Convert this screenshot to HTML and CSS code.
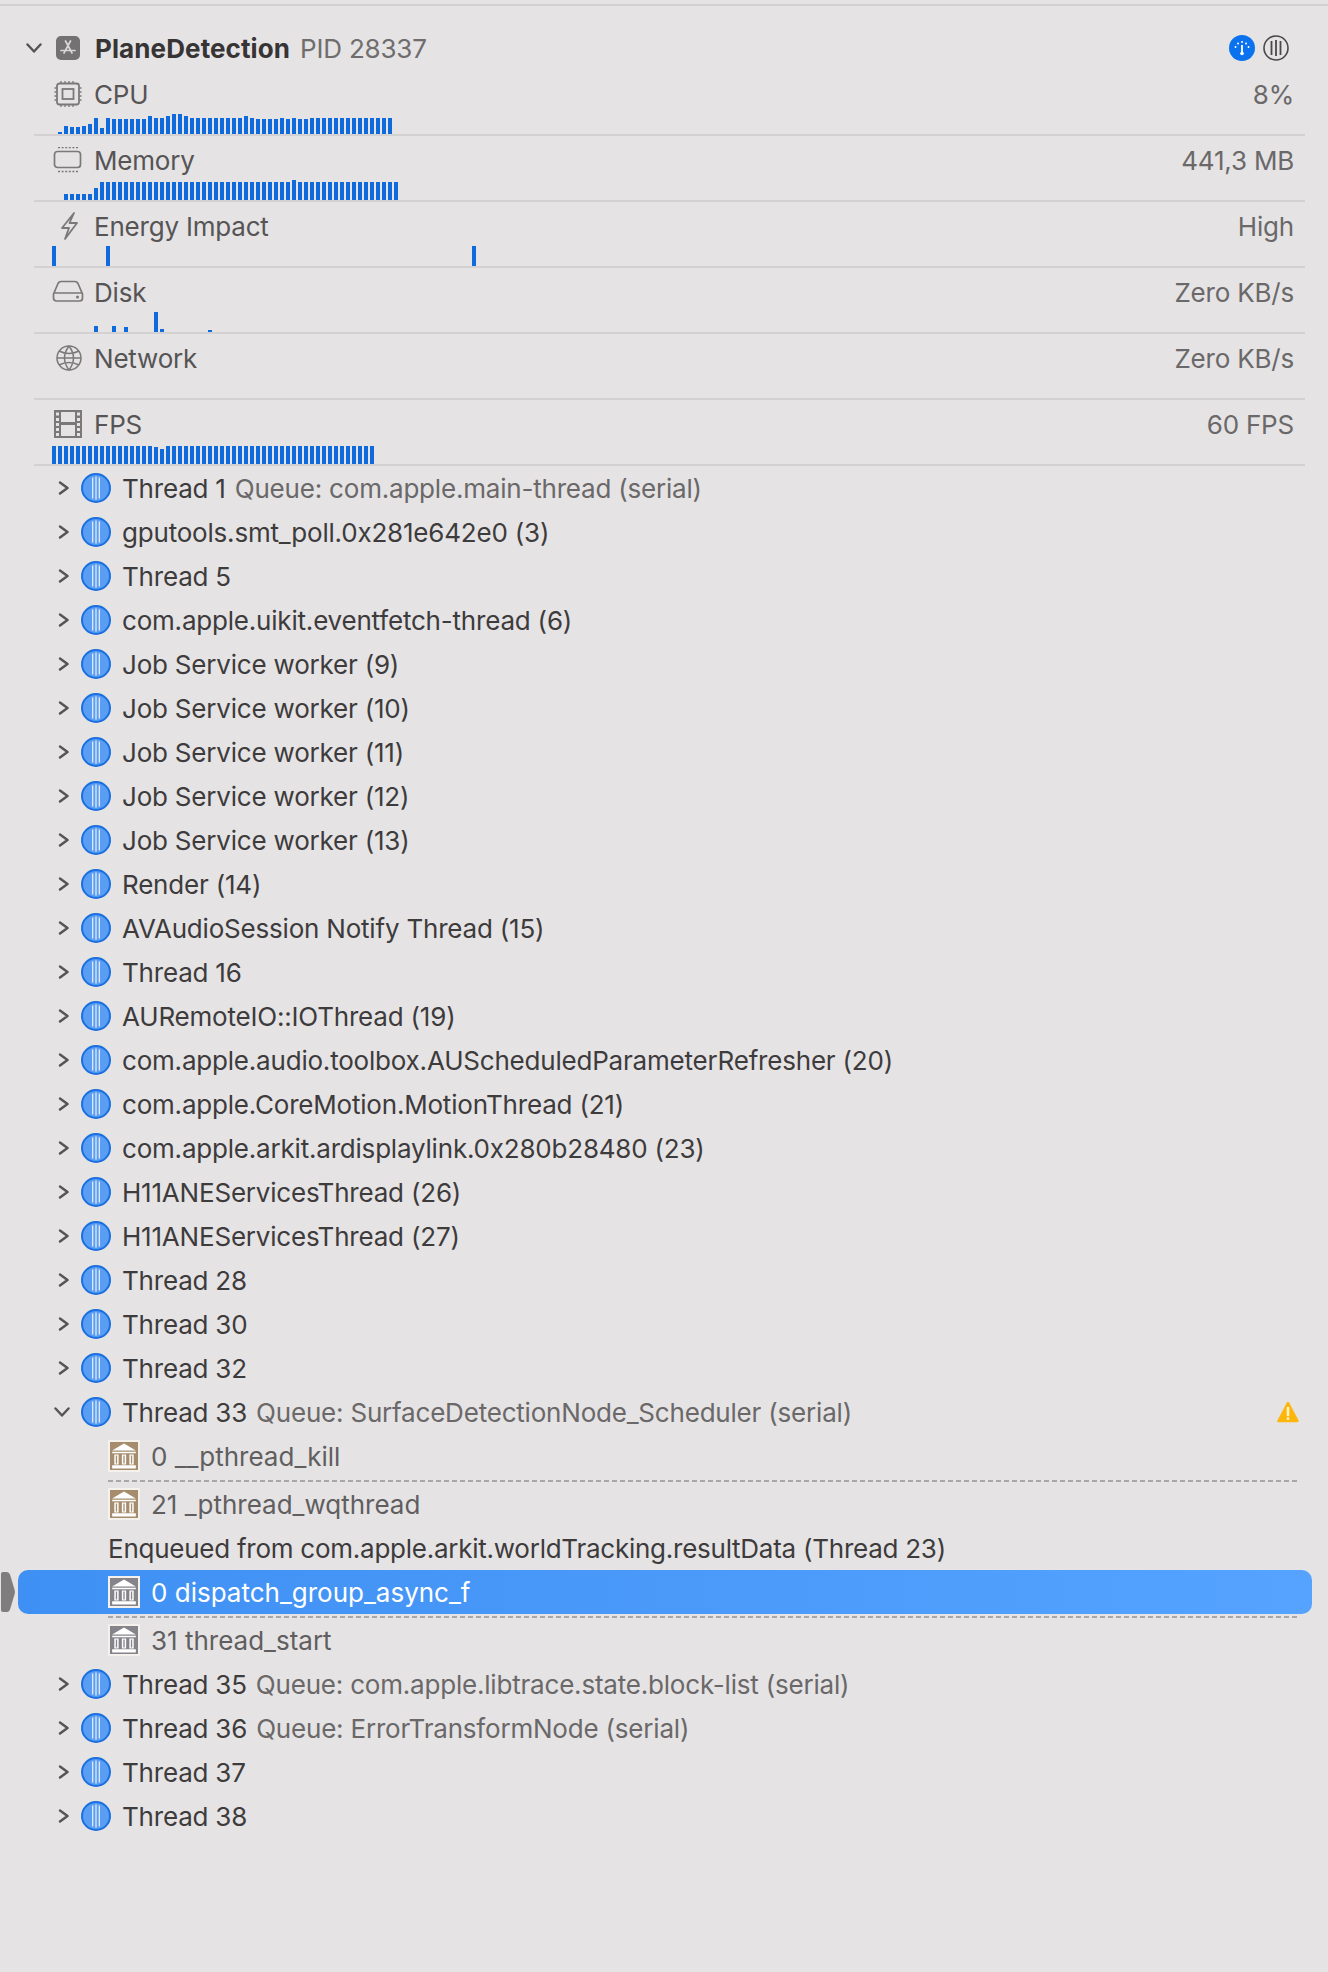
FILE: index.html
```html
<!DOCTYPE html>
<html>
<head>
	<title>Debug Navigator</title>
	<link rel="stylesheet" href="styles.css">
</head>
<body>
	<svg class="defs" width="0" height="0">
		<symbol id="chev-right" viewBox="0 0 12 14"><path d="M2 1.500 9.500 7 2 12.500" fill="none" stroke="currentColor" stroke-width="2.400" stroke-linecap="round" stroke-linejoin="round"/></symbol>
		<symbol id="chev-down" viewBox="0 0 16 10"><path d="M1.500 1.500 8 8.500l6.500-7" fill="none" stroke="currentColor" stroke-width="2.400" stroke-linecap="round" stroke-linejoin="round"/></symbol>
		<symbol id="thread" viewBox="0 0 30 30">
			<circle cx="15" cy="15" r="14" fill="#5a9ef4" stroke="#1a6fe0" stroke-width="2"/>
			<path d="M11.700 4.500v21M15 3.500v23M18.300 4.500v21" stroke="#e9f1fc" stroke-width="1.200" fill="none"/>
		</symbol>
		<symbol id="bank" viewBox="3 4 26 25">
			<path d="M16 5 27 11.500H5zM5 12.500h22v1.500H5zM7 15h4v9.500H7zM14 15h4v9.500h-4zM21 15h4v9.500h-4zM5 25h22v3H5z" fill="#fff"/>
			<path d="M9 16v7.500M16 16v7.500M23 16v7.500" stroke="currentColor" stroke-width="1.200"/>
		</symbol>
	</svg>

	<div class="panel">
		<div class="process">
			<svg class="proc-chev"><use href="#chev-down"/></svg>
			<svg class="app-icon" viewBox="0 0 24 24">
				<rect width="24" height="24" rx="5" fill="#737172"/>
				<path d="M9.500 5l6.500 12M14.500 5 8 17M5 14.500h14" stroke="#d8d6d7" stroke-width="1.700" fill="none" stroke-linecap="round"/>
			</svg>
			<span class="proc-name">PlaneDetection</span>
			<span class="proc-pid">PID 28337</span>
			<div class="proc-actions">
				<svg class="action" viewBox="0 0 26 26">
					<circle cx="13" cy="13" r="13" fill="#0a72ee"/>
					<path d="M13 10v8" stroke="#fff" stroke-width="1.800"/>
					<circle cx="13" cy="18.500" r="1.800" fill="#fff"/>
					<path d="M6.500 12h.1M9 8.500h.1M13 7h.1M17 8.500h.1M19.500 12h.1" stroke="#fff" stroke-width="1.800" stroke-linecap="round"/>
				</svg>
				<svg class="action" viewBox="0 0 26 26">
					<circle cx="13" cy="13" r="12" fill="none" stroke="#4a4849" stroke-width="1.600"/>
					<path d="M8.500 6v14M13 5v16M17.500 6v14" stroke="#4a4849" stroke-width="1.800" fill="none"/>
				</svg>
			</div>
		</div>

		<div class="gauge">
			<div class="gauge-head">
				<svg class="gauge-icon" viewBox="0 0 32 26" fill="none" stroke="#7a7879">
					<rect x="5" y="2.500" width="22" height="21" rx="2.500" stroke-width="1.800"/>
					<rect x="10.500" y="8" width="11" height="10" stroke-width="1.800"/>
					<path d="M9 0v2M13 0v2M17 0v2M21 0v2M9 24v2M13 24v2M17 24v2M21 24v2M2.500 7h2M2.500 11h2M2.500 15h2M2.500 19h2M27.500 7h2M27.500 11h2M27.500 15h2M27.500 19h2" stroke-width="1.300"/>
				</svg>
				<span class="gauge-label">CPU</span>
				<span class="gauge-value">8%</span>
			</div>
			<div class="chart chart-cpu" id="cpu"></div>
		</div>

		<div class="gauge">
			<div class="gauge-head">
				<svg class="gauge-icon" viewBox="0 0 32 26" fill="none" stroke="#7a7879">
					<rect x="2.500" y="4.500" width="26" height="16" rx="3" stroke-width="1.700"/>
					<path d="M6 0.500h20M6 24.500h20" stroke-width="1.400" stroke-dasharray="2 1.600"/>
				</svg>
				<span class="gauge-label">Memory</span>
				<span class="gauge-value">441,3 MB</span>
			</div>
			<div class="chart chart-memory" id="memory"></div>
		</div>

		<div class="gauge">
			<div class="gauge-head">
				<svg class="gauge-icon gauge-icon-film" viewBox="0 0 32 28" fill="none" stroke="#7a7879">
					<path d="M22 1 10 16h7l-4 11L25 11h-7.500z" stroke-width="1.800" stroke-linejoin="round"/>
				</svg>
				<span class="gauge-label">Energy Impact</span>
				<span class="gauge-value">High</span>
			</div>
			<div class="chart chart-energy" id="energy"></div>
		</div>

		<div class="gauge">
			<div class="gauge-head">
				<svg class="gauge-icon" viewBox="0 0 32 26" fill="none" stroke="#7a7879">
					<path d="M1.500 15 6 4.500Q7 2.500 9 2.500h14q2 0 3 2L30.500 15v4q0 3-3 3h-23q-3 0-3-3zM1.500 14h29" stroke-width="1.700"/>
					<circle cx="25.500" cy="18" r="1.500" fill="#7a7879" stroke="none"/>
				</svg>
				<span class="gauge-label">Disk</span>
				<span class="gauge-value">Zero KB/s</span>
			</div>
			<div class="chart chart-disk" id="disk"></div>
		</div>

		<div class="gauge">
			<div class="gauge-head">
				<svg class="gauge-icon" viewBox="0 0 32 26" fill="none" stroke="#7a7879" stroke-width="1.500">
					<circle cx="17" cy="13" r="12"/>
					<path d="M7 6q10 5 20 0M5 13h24M7 20q10-5 20 0M17 1q-9 12 0 24M17 1q9 12 0 24"/>
				</svg>
				<span class="gauge-label">Network</span>
				<span class="gauge-value">Zero KB/s</span>
			</div>
			<div class="chart"></div>
		</div>

		<div class="gauge">
			<div class="gauge-head">
				<svg class="gauge-icon gauge-icon-film" viewBox="0 0 32 28">
					<path fill="#7a7879" fill-rule="evenodd" d="M2 0h28v28H2zM9 2v10h14V2zM9 15v11h14V15zM4 2.500v3h3v-3zM4 8v3h3V8zM4 13v3h3v-3zM4 18v3h3v-3zM4 23v3h3v-3zM25 2.500v3h3v-3zM25 8v3h3V8zM25 13v3h3v-3zM25 18v3h3v-3zM25 23v3h3v-3z"/>
				</svg>
				<span class="gauge-label">FPS</span>
				<span class="gauge-value">60 FPS</span>
			</div>
			<div class="chart chart-fps" id="fps"></div>
		</div>

		<div class="threads">
			<div class="thread"><svg class="chev"><use href="#chev-right"/></svg><svg class="thread-icon"><use href="#thread"/></svg><span>Thread 1</span><span class="queue">Queue: com.apple.main-thread (serial)</span></div>
			<div class="thread"><svg class="chev"><use href="#chev-right"/></svg><svg class="thread-icon"><use href="#thread"/></svg><span>gputools.smt_poll.0x281e642e0 (3)</span></div>
			<div class="thread"><svg class="chev"><use href="#chev-right"/></svg><svg class="thread-icon"><use href="#thread"/></svg><span>Thread 5</span></div>
			<div class="thread"><svg class="chev"><use href="#chev-right"/></svg><svg class="thread-icon"><use href="#thread"/></svg><span>com.apple.uikit.eventfetch-thread (6)</span></div>
			<div class="thread"><svg class="chev"><use href="#chev-right"/></svg><svg class="thread-icon"><use href="#thread"/></svg><span>Job Service worker (9)</span></div>
			<div class="thread"><svg class="chev"><use href="#chev-right"/></svg><svg class="thread-icon"><use href="#thread"/></svg><span>Job Service worker (10)</span></div>
			<div class="thread"><svg class="chev"><use href="#chev-right"/></svg><svg class="thread-icon"><use href="#thread"/></svg><span>Job Service worker (11)</span></div>
			<div class="thread"><svg class="chev"><use href="#chev-right"/></svg><svg class="thread-icon"><use href="#thread"/></svg><span>Job Service worker (12)</span></div>
			<div class="thread"><svg class="chev"><use href="#chev-right"/></svg><svg class="thread-icon"><use href="#thread"/></svg><span>Job Service worker (13)</span></div>
			<div class="thread"><svg class="chev"><use href="#chev-right"/></svg><svg class="thread-icon"><use href="#thread"/></svg><span>Render (14)</span></div>
			<div class="thread"><svg class="chev"><use href="#chev-right"/></svg><svg class="thread-icon"><use href="#thread"/></svg><span>AVAudioSession Notify Thread (15)</span></div>
			<div class="thread"><svg class="chev"><use href="#chev-right"/></svg><svg class="thread-icon"><use href="#thread"/></svg><span>Thread 16</span></div>
			<div class="thread"><svg class="chev"><use href="#chev-right"/></svg><svg class="thread-icon"><use href="#thread"/></svg><span>AURemoteIO::IOThread (19)</span></div>
			<div class="thread"><svg class="chev"><use href="#chev-right"/></svg><svg class="thread-icon"><use href="#thread"/></svg><span>com.apple.audio.toolbox.AUScheduledParameterRefresher (20)</span></div>
			<div class="thread"><svg class="chev"><use href="#chev-right"/></svg><svg class="thread-icon"><use href="#thread"/></svg><span>com.apple.CoreMotion.MotionThread (21)</span></div>
			<div class="thread"><svg class="chev"><use href="#chev-right"/></svg><svg class="thread-icon"><use href="#thread"/></svg><span>com.apple.arkit.ardisplaylink.0x280b28480 (23)</span></div>
			<div class="thread"><svg class="chev"><use href="#chev-right"/></svg><svg class="thread-icon"><use href="#thread"/></svg><span>H11ANEServicesThread (26)</span></div>
			<div class="thread"><svg class="chev"><use href="#chev-right"/></svg><svg class="thread-icon"><use href="#thread"/></svg><span>H11ANEServicesThread (27)</span></div>
			<div class="thread"><svg class="chev"><use href="#chev-right"/></svg><svg class="thread-icon"><use href="#thread"/></svg><span>Thread 28</span></div>
			<div class="thread"><svg class="chev"><use href="#chev-right"/></svg><svg class="thread-icon"><use href="#thread"/></svg><span>Thread 30</span></div>
			<div class="thread"><svg class="chev"><use href="#chev-right"/></svg><svg class="thread-icon"><use href="#thread"/></svg><span>Thread 32</span></div>

			<div class="thread">
				<svg class="chev chev-open"><use href="#chev-down"/></svg><svg class="thread-icon"><use href="#thread"/></svg><span>Thread 33</span><span class="queue">Queue: SurfaceDetectionNode_Scheduler (serial)</span>
				<svg class="warning" viewBox="0 0 22 22">
					<path d="M11 2 20.500 20H1.500z" fill="#fdb60c" stroke="#fdb60c" stroke-width="2.500" stroke-linejoin="round"/>
					<path d="M11 7v7" stroke="#fff4c8" stroke-width="2.600" stroke-linecap="round"/>
					<circle cx="11" cy="17.700" r="1.400" fill="#fff4c8"/>
				</svg>
			</div>

			<div class="frame frame-tall"><svg class="bank bank-brown"><use href="#bank"/></svg><span>0 __pthread_kill</span></div>
			<div class="dash"></div>
			<div class="frame"><svg class="bank bank-brown"><use href="#bank"/></svg><span>21 _pthread_wqthread</span></div>
			<div class="enqueued">Enqueued from com.apple.arkit.worldTracking.resultData (Thread 23)</div>
			<div class="frame frame-selected">
				<svg class="marker" viewBox="0 0 14 40"><path d="M2 0h4q2 0 3 2.500l4.500 15q.7 2.500 0 5L9 37.500Q8 40 6 40H2q-2 0-2-2V2q0-2 2-2z" fill="#7f7d7e"/></svg>
				<svg class="bank bank-gray"><use href="#bank"/></svg><span>0 dispatch_group_async_f</span>
			</div>
			<div class="dash dash-low"></div>
			<div class="frame"><svg class="bank bank-gray"><use href="#bank"/></svg><span>31 thread_start</span></div>

			<div class="thread"><svg class="chev"><use href="#chev-right"/></svg><svg class="thread-icon"><use href="#thread"/></svg><span>Thread 35</span><span class="queue">Queue: com.apple.libtrace.state.block-list (serial)</span></div>
			<div class="thread"><svg class="chev"><use href="#chev-right"/></svg><svg class="thread-icon"><use href="#thread"/></svg><span>Thread 36</span><span class="queue">Queue: ErrorTransformNode (serial)</span></div>
			<div class="thread"><svg class="chev"><use href="#chev-right"/></svg><svg class="thread-icon"><use href="#thread"/></svg><span>Thread 37</span></div>
			<div class="thread"><svg class="chev"><use href="#chev-right"/></svg><svg class="thread-icon"><use href="#thread"/></svg><span>Thread 38</span></div>
		</div>
	</div>

	<script src="script.js"></script>
</body>
</html>
```
FILE: styles.css
```css
html {
	height: 1972px;
	overflow: hidden;
}

body {
	margin: 0;
	height: 1972px;
	padding-top: 4px;
	box-sizing: border-box;
	overflow: hidden;
	background-color: #E5E3E4;
	font-family: Inter, "Noto Sans", sans-serif;
	font-size: 26px;
	font-feature-settings: "calt" 0;
	letter-spacing: -0.2px;
	color: #3D3B3C;
}

.defs {
	position: absolute;
}

.panel {
	border-top: 2px solid #D3D1D2;
}

.process {
	display: flex;
	align-items: center;
	height: 64px;
	padding: 20px 39px 0 26px;
	box-sizing: border-box;
}

.proc-chev {
	width: 16px;
	height: 10px;
	color: #555354;
	margin-right: 14px;
}

.app-icon {
	width: 24px;
	height: 24px;
	margin-right: 15px;
}

.proc-name {
	font-weight: 700;
	letter-spacing: 0.1px;
	color: #363435;
}

.proc-pid {
	color: #6F6D6E;
	margin-left: 10px;
}

.proc-actions {
	display: flex;
	gap: 8px;
	margin-left: auto;
}

.action {
	width: 26px;
	height: 26px;
}

.gauge {
	height: 66px;
	margin: 0 23px 0 34px;
	border-bottom: 2px solid #D3D1D2;
	box-sizing: border-box;
	padding-top: 10px;
}

.gauge-head {
	display: flex;
	align-items: center;
	height: 28px;
	margin-bottom: 2px;
	padding: 0 11px 0 18px;
}

.gauge-icon {
	width: 32px;
	height: 26px;
	margin-right: 10px;
}

.gauge-icon-film {
	height: 28px;
}

.gauge-label {
	color: #565455;
}

.gauge-value {
	margin-left: auto;
	color: #6A6869;
}

.chart {
	display: flex;
	align-items: flex-end;
	gap: 2px;
	height: 24px;
}

.chart i {
	display: block;
	width: 4px;
	background-color: #0F6BDC;
}

.chart-cpu {
	margin-left: 24px;
}

.chart-memory {
	margin-left: 30px;
}

.chart-energy,
.chart-fps {
	margin-left: 18px;
}

.chart-disk {
	margin-left: 60px;
}

.thread {
	display: flex;
	align-items: center;
	height: 44px;
	padding-left: 58px;
}

.chev {
	width: 12px;
	height: 14px;
	color: #555354;
	margin-right: 11px;
}

.chev-open {
	width: 16px;
	height: 10px;
	margin-left: -4px;
	margin-right: 11px;
}

.thread-icon {
	width: 30px;
	height: 30px;
	margin-right: 11px;
}

.queue {
	color: #6A6869;
	margin-left: 9px;
}

.warning {
	width: 22px;
	height: 22px;
	margin-left: auto;
	margin-right: 29px;
}

.frame {
	position: relative;
	display: flex;
	align-items: center;
	height: 44px;
	padding-left: 108px;
	letter-spacing: 0;
	color: #605E5F;
}

.frame-tall {
	height: 46px;
	padding-bottom: 2px;
	box-sizing: border-box;
}

.bank {
	width: 32px;
	height: 32px;
	margin-right: 11px;
	border: 2px solid #F5F2EE;
	box-sizing: border-box;
}

.bank-brown {
	background-color: #A48C6C;
	color: #A48C6C;
}

.bank-gray {
	background-color: #85848A;
	color: #85848A;
}

.dash {
	height: 2px;
	margin: 0 30px 0 108px;
	background: repeating-linear-gradient(90deg, #A9A7A8 0 5px, transparent 5px 8px);
}

.dash-low {
	margin-top: 2px;
}

.enqueued {
	display: flex;
	align-items: center;
	height: 44px;
	padding-left: 108px;
	letter-spacing: -0.25px;
	color: #3D3B3C;
}

.frame-selected {
	margin: 0 16px 0 18px;
	padding-left: 90px;
	border-radius: 10px;
	background: linear-gradient(90deg, #3F90F4, #55A3FF);
	color: #FFFFFF;
}

.marker {
	position: absolute;
	left: -17px;
	top: 2px;
	width: 14px;
	height: 40px;
}
```
FILE: script.js
```js
// heights of the bars in the gauge charts, 0 leaves a gap
function repeat(value, count) {
	return Array(count).fill(value);
}

function sparse(length, bars) {
	const heights = repeat(0, length);
	Object.keys(bars).forEach(index => {
		heights[index] = bars[index];
	});
	return heights;
}

const charts = {
	cpu: [2, 8, 7, 7, 8, 10, 16, 6, 16, 15, 15, 15, 15, 15, 15, 18, 16, 16, 18, 20, 20, 18,
		...repeat(16, 9), 18, 16, 15, 15, 15, 15, 16, 15, 16, 15, 15, ...repeat(16, 14)],
	memory: [6, 6, 6, 6, 6, 12, ...repeat(18, 32), 20, ...repeat(18, 17)],
	energy: sparse(71, { 0: 20, 9: 20, 70: 20 }),
	disk: sparse(20, { 0: 6, 3: 6, 5: 5, 10: 20, 11: 3, 19: 2 }),
	fps: [...repeat(18, 17), 17, 15, ...repeat(18, 35)]
};

Object.keys(charts).forEach(id => {
	const chart = document.querySelector('#' + id);
	charts[id].forEach(height => {
		const bar = document.createElement('i');
		bar.style.height = height + 'px';
		chart.appendChild(bar);
	});
});
```
